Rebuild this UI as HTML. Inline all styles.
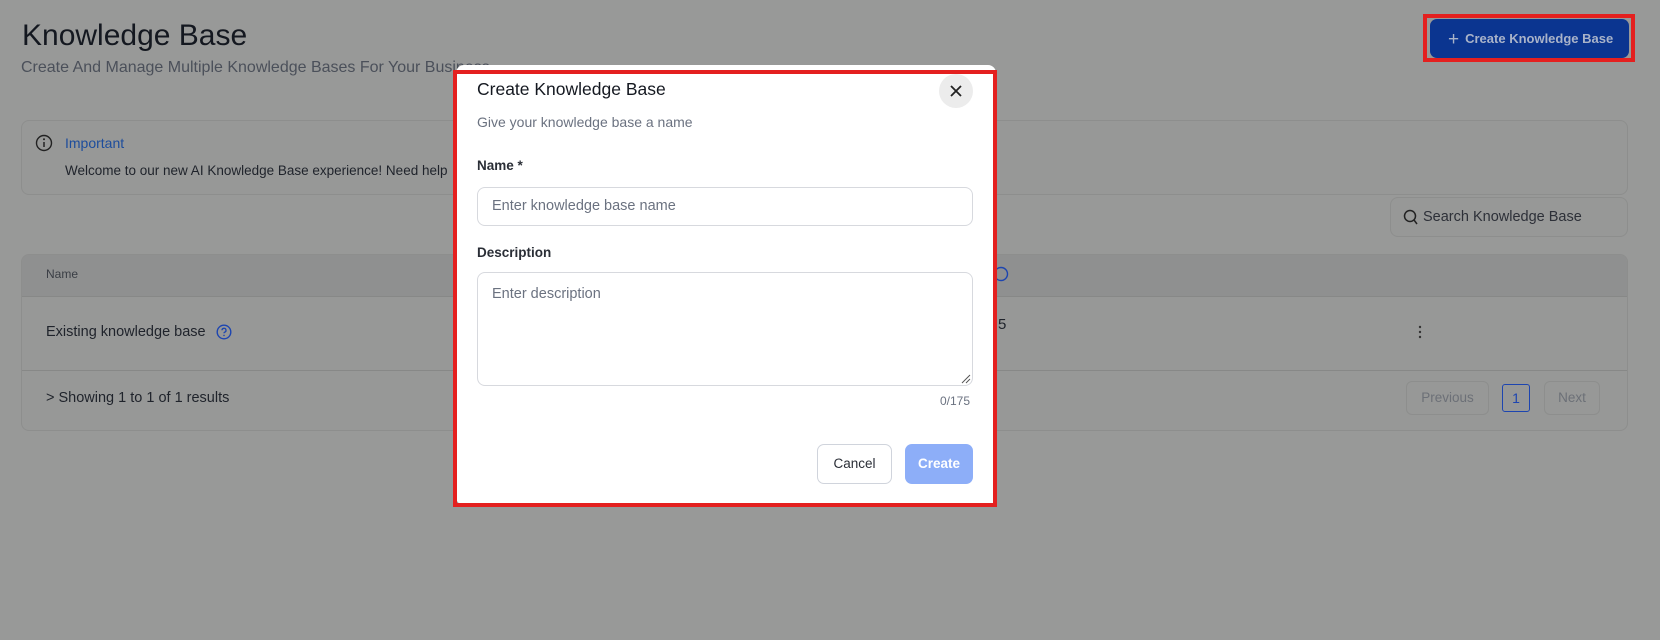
<!DOCTYPE html>
<html><head><meta charset="utf-8"><style>
*{box-sizing:border-box;margin:0;padding:0}
body{width:1660px;height:640px;overflow:hidden;background:#989998;font-family:"Liberation Sans",sans-serif;position:relative;color:#1b1f27}
.abs{position:absolute}
.card{position:absolute;border:1px solid #8d8e8d;border-radius:8px;background:#979897}
.t{position:absolute;white-space:nowrap}
</style></head><body>
<div class="t" style="left:22px;top:19px;font-size:30px;color:#141820">Knowledge Base</div>
<div class="t" style="left:21px;top:59px;font-size:16px;color:#4b505a">Create And Manage Multiple Knowledge Bases For Your Business</div>

<div class="abs" style="left:1423px;top:14px;width:212px;height:48px;border:4px solid #e4201f"></div>
<div class="abs" style="left:1430px;top:19px;width:199px;height:39px;background:#0b3590;border-radius:7px;color:#a9b3c9;font-size:13px;font-weight:bold;line-height:39px;padding-left:18px">
<span style="font-size:19px;font-weight:normal;vertical-align:-2px;margin-right:6px">+</span>Create Knowledge Base</div>

<div class="card" style="left:21px;top:120px;width:1607px;height:75px"></div>
<svg class="abs" style="left:35px;top:134px" width="18" height="18" viewBox="0 0 18 18"><circle cx="9" cy="9" r="7.5" fill="none" stroke="#222" stroke-width="1.4"/><line x1="9" y1="8" x2="9" y2="13" stroke="#222" stroke-width="1.5"/><circle cx="9" cy="5.3" r="1" fill="#222"/></svg>
<div class="t" style="left:65px;top:135px;font-size:14px;color:#1d4d9c">Important</div>
<div class="t" style="left:65px;top:163px;font-size:13.5px;color:#1f232b">Welcome to our new AI Knowledge Base experience! Need help</div>

<div class="card" style="left:1390px;top:197px;width:238px;height:40px"></div>
<svg class="abs" style="left:1403px;top:209px" width="16" height="17" viewBox="0 0 16 17"><circle cx="7" cy="7" r="5.5" fill="none" stroke="#222" stroke-width="1.5"/><line x1="11" y1="11" x2="14" y2="15" stroke="#222" stroke-width="1.5"/></svg>
<div class="t" style="left:1423px;top:209px;font-size:14.5px;color:#2d3038">Search Knowledge Base</div>

<div class="card" style="left:21px;top:254px;width:1607px;height:177px;overflow:hidden">
<div class="abs" style="left:0;top:0;width:100%;height:42px;background:#8f9090;border-bottom:1px solid #878887"></div>
<div class="abs" style="left:0;top:115px;width:100%;height:1px;background:#878887"></div>
</div>
<div class="t" style="left:46px;top:267px;font-size:12px;color:#3a3e45">Name</div>
<svg class="abs" style="left:997px;top:266px" width="14" height="16"><circle cx="4" cy="8" r="6.5" fill="none" stroke="#1d45b0" stroke-width="1.4"/></svg>
<div class="t" style="left:46px;top:324px;font-size:14.5px;color:#1f232b">Existing knowledge base</div>
<svg class="abs" style="left:216px;top:324px" width="16" height="16" viewBox="0 0 16 16"><circle cx="8" cy="8" r="6.8" fill="none" stroke="#1d45b0" stroke-width="1.4"/><path d="M6 6.3a2 2 0 1 1 2.6 1.9c-.5.2-.6.5-.6 1.1" fill="none" stroke="#1d45b0" stroke-width="1.3"/><circle cx="8" cy="11.4" r=".8" fill="#1d45b0"/></svg>
<div class="t" style="left:998px;top:316px;font-size:15px;color:#1f232b">5</div>
<svg class="abs" style="left:1417px;top:324px" width="6" height="16"><circle cx="3" cy="3" r="1.2" fill="#333"/><circle cx="3" cy="8" r="1.2" fill="#333"/><circle cx="3" cy="13" r="1.2" fill="#333"/></svg>
<div class="t" style="left:46px;top:390px;font-size:14.5px;color:#1f232b">&gt; Showing 1 to 1 of 1 results</div>
<div class="abs" style="left:1406px;top:381px;width:83px;height:34px;border:1px solid #8d8e8d;border-radius:6px;font-size:13.5px;color:#6c7077;text-align:center;line-height:32px">Previous</div>
<div class="abs" style="left:1502px;top:384px;width:28px;height:28px;border:1px solid #1d45b0;border-radius:3px;font-size:14px;color:#1d45b0;text-align:center;line-height:26px">1</div>
<div class="abs" style="left:1544px;top:381px;width:56px;height:34px;border:1px solid #8d8e8d;border-radius:6px;font-size:13.5px;color:#6c7077;text-align:center;line-height:32px">Next</div>

<div class="abs" style="left:456px;top:65px;width:540px;height:440px;background:#fff;border-radius:8px"></div>
<div class="abs" style="left:453px;top:70px;width:544px;height:437px;border:4px solid #e4201f"></div>
<div class="t" style="left:477px;top:79px;font-size:17.5px;color:#141820">Create Knowledge Base</div>
<div class="abs" style="left:939px;top:74px;width:34px;height:34px;border-radius:50%;background:#ececec"></div>
<svg class="abs" style="left:949px;top:84px" width="14" height="14"><path d="M2 2L12 12M12 2L2 12" stroke="#222" stroke-width="1.8"/></svg>
<div class="t" style="left:477px;top:114px;font-size:14px;color:#6b7280">Give your knowledge base a name</div>
<div class="t" style="left:477px;top:158px;font-size:13.5px;font-weight:bold;color:#2a2e36">Name *</div>
<div class="abs" style="left:477px;top:187px;width:496px;height:39px;border:1px solid #d7d9de;border-radius:8px;font-size:14.5px;color:#6b7280;line-height:37px;padding-left:14px">Enter knowledge base name</div>
<div class="t" style="left:477px;top:245px;font-size:13.5px;font-weight:bold;color:#2a2e36">Description</div>
<div class="abs" style="left:477px;top:272px;width:496px;height:114px;border:1px solid #d7d9de;border-radius:8px;font-size:14.5px;color:#6b7280;padding:13px 14px">Enter description</div>
<svg class="abs" style="left:961px;top:374px" width="10" height="10"><path d="M1 9L9 1M5 9L9 5" stroke="#555" stroke-width="1"/></svg>
<div class="t" style="left:940px;top:394px;font-size:12px;color:#6b7280">0/175</div>
<div class="abs" style="left:817px;top:444px;width:75px;height:40px;border:1px solid #d0d4dc;border-radius:7px;font-size:13.5px;font-weight:500;color:#2a2e36;text-align:center;line-height:38px">Cancel</div>
<div class="abs" style="left:905px;top:444px;width:68px;height:40px;background:#8daef8;border-radius:7px;font-size:13.5px;font-weight:bold;color:#fff;text-align:center;line-height:40px">Create</div>
</body></html>
